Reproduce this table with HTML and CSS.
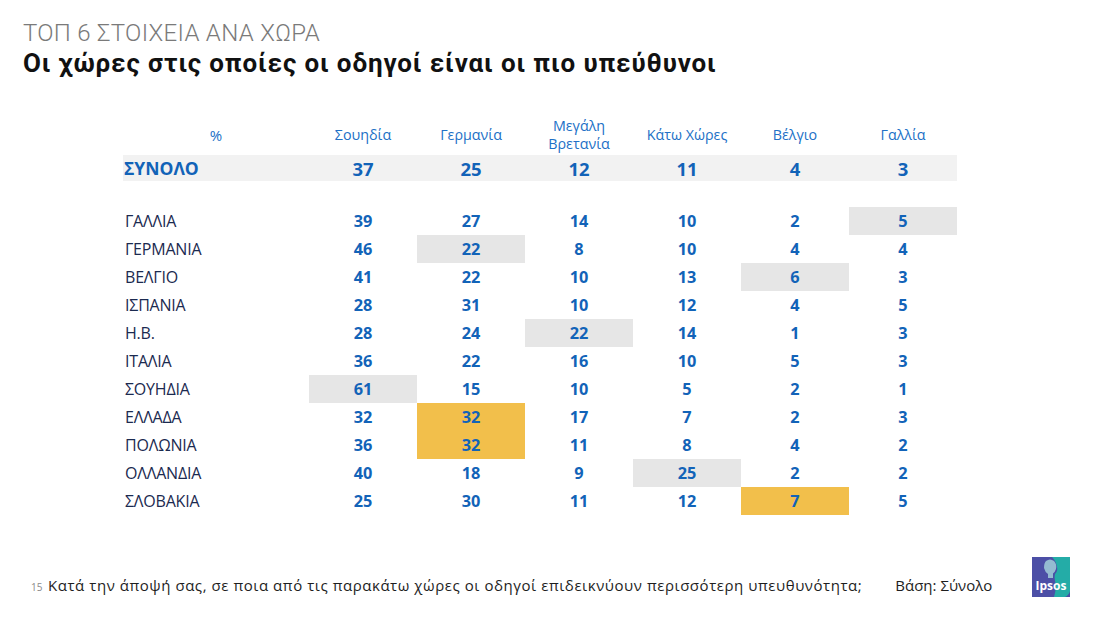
FILE: index.html
```html
<!DOCTYPE html>
<html lang="el">
<head>
<meta charset="utf-8">
<link rel="stylesheet" href="styles.css">
</head>
<body>
<div class="slide">
  <header class="head">
    <div class="kicker">ΤΟΠ 6 ΣΤΟΙΧΕΙΑ ΑΝΑ ΧΩΡΑ</div>
    <h1 class="title">Οι χώρες στις οποίες οι οδηγοί είναι οι πιο υπεύθυνοι</h1>
  </header>

  <div class="grid">
    <div class="hcell pct">%</div>
    <div class="hcell">Σουηδία</div>
    <div class="hcell">Γερμανία</div>
    <div class="hcell">Μεγάλη<br>Βρετανία</div>
    <div class="hcell">Κάτω Χώρες</div>
    <div class="hcell">Βέλγιο</div>
    <div class="hcell">Γαλλία</div>

    <div class="total">
      <div class="tlabel">ΣΥΝΟΛΟ</div>
      <div class="tnum">37</div><div class="tnum">25</div><div class="tnum">12</div><div class="tnum">11</div><div class="tnum">4</div><div class="tnum">3</div>
    </div>

    <div class="spacer"></div>

    <div class="label">ΓΑΛΛΙΑ</div><div class="num">39</div><div class="num">27</div><div class="num">14</div><div class="num">10</div><div class="num">2</div><div class="num gray">5</div>
    <div class="label">ΓΕΡΜΑΝΙΑ</div><div class="num">46</div><div class="num gray">22</div><div class="num">8</div><div class="num">10</div><div class="num">4</div><div class="num">4</div>
    <div class="label">ΒΕΛΓΙΟ</div><div class="num">41</div><div class="num">22</div><div class="num">10</div><div class="num">13</div><div class="num gray">6</div><div class="num">3</div>
    <div class="label">ΙΣΠΑΝΙΑ</div><div class="num">28</div><div class="num">31</div><div class="num">10</div><div class="num">12</div><div class="num">4</div><div class="num">5</div>
    <div class="label">Η.Β.</div><div class="num">28</div><div class="num">24</div><div class="num gray">22</div><div class="num">14</div><div class="num">1</div><div class="num">3</div>
    <div class="label">ΙΤΑΛΙΑ</div><div class="num">36</div><div class="num">22</div><div class="num">16</div><div class="num">10</div><div class="num">5</div><div class="num">3</div>
    <div class="label">ΣΟΥΗΔΙΑ</div><div class="num gray">61</div><div class="num">15</div><div class="num">10</div><div class="num">5</div><div class="num">2</div><div class="num">1</div>
    <div class="label">ΕΛΛΑΔΑ</div><div class="num">32</div><div class="num gold">32</div><div class="num">17</div><div class="num">7</div><div class="num">2</div><div class="num">3</div>
    <div class="label">ΠΟΛΩΝΙΑ</div><div class="num">36</div><div class="num gold">32</div><div class="num">11</div><div class="num">8</div><div class="num">4</div><div class="num">2</div>
    <div class="label">ΟΛΛΑΝΔΙΑ</div><div class="num">40</div><div class="num">18</div><div class="num">9</div><div class="num gray">25</div><div class="num">2</div><div class="num">2</div>
    <div class="label">ΣΛΟΒΑΚΙΑ</div><div class="num">25</div><div class="num">30</div><div class="num">11</div><div class="num">12</div><div class="num gold">7</div><div class="num">5</div>
  </div>

  <footer class="foot">
    <span class="pg">15</span>
    <span class="question">Κατά την άποψή σας, σε ποια από τις παρακάτω χώρες οι οδηγοί επιδεικνύουν περισσότερη υπευθυνότητα;</span>
    <span class="base">Βάση: Σύνολο</span>
    <svg class="logo" width="38" height="40" viewBox="0 0 38 40" aria-label="Ipsos">
      <rect x="0" y="0" width="38" height="40" fill="#4c4fa6"/>
      <path d="M20 0 H38 V34 Q37 38 33 40 H22 Q25 30 23 24 Q22 20 23 17 Q26 14 25 10 Q24 4 20 0 Z" fill="#24aca7"/>
      <path d="M14 4 Q18 1 22 4 Q25 7 24 12 Q23 15 21 16.5 L21 21 L16 21 L16 17 Q13 15 12 11 Q12 6 14 4 Z" fill="#a7d6dc" opacity="0.8"/>
      <text x="19" y="33" text-anchor="middle" class="logotext">Ipsos</text>
    </svg>
  </footer>
</div>
</body>
</html>
```
FILE: styles.css
```css
* { box-sizing: border-box; margin: 0; padding: 0; }
html, body { width: 1100px; height: 619px; background: #fff; overflow: hidden; }
body { font-family: "Open Sans", "Noto Sans", sans-serif; }

.slide { position: relative; width: 1100px; height: 619px; display: flex; flex-direction: column; }

.head { padding: 19px 0 0 23px; }
.kicker { font-family: Roboto, "Open Sans", sans-serif; font-size: 24px; font-weight: 300; color: #7a7a7a; line-height: 29px; letter-spacing: 0.3px; }
.title { font-family: Roboto, "Open Sans", sans-serif; font-size: 26px; font-weight: 700; color: #111; line-height: 30px; letter-spacing: 0.85px; }

.grid {
  margin: 34px 0 0 123px;
  display: grid;
  grid-template-columns: 186px repeat(6, 108px);
  grid-template-rows: 43px 26px 26px;
  grid-auto-rows: 28px;
  width: 834px;
}
.hcell {
  align-self: start;
  height: 46px;
  display: flex; align-items: center; justify-content: center;
  text-align: center;
  font-size: 14.3px; line-height: 18px; color: #2170c6;
}
.pct { font-size: 15px; }

.total {
  grid-column: 1 / -1;
  display: grid;
  grid-template-columns: 186px repeat(6, 108px);
  background: #f2f2f2;
  height: 26px;
  align-items: center;
  color: #1263b8; font-weight: 700;
}
.tlabel { font-size: 17.5px; padding-left: 1px; }
.tnum { font-size: 18.5px; text-align: center; }

.spacer { grid-column: 1 / -1; }

.label { display: flex; align-items: center; padding-left: 2px; font-size: 16px; color: #1b2a50; letter-spacing: -0.2px; }
.num { display: flex; align-items: center; justify-content: center; font-size: 16.3px; font-weight: 700; color: #1263b8; }
.gray { background: #e6e6e6; }
.gold { background: #f2bf4b; }

.foot {
  margin-top: auto;
  height: 59px;
  padding: 0 0 9px 31px;
  display: flex; align-items: center;
}
.pg { font-size: 10px; color: #8a8a8a; width: 17px; padding-top: 3px; }
.question { font-size: 15px; color: #1e1e1e; letter-spacing: 0.55px; }
.base { font-size: 15px; color: #1e1e1e; margin-left: 33px; letter-spacing: 0; }
.logo { margin-left: 40px; margin-top: -17px; }
.logotext { font-family: "Open Sans", sans-serif; font-weight: 700; font-size: 12px; fill: #fff; }
```
